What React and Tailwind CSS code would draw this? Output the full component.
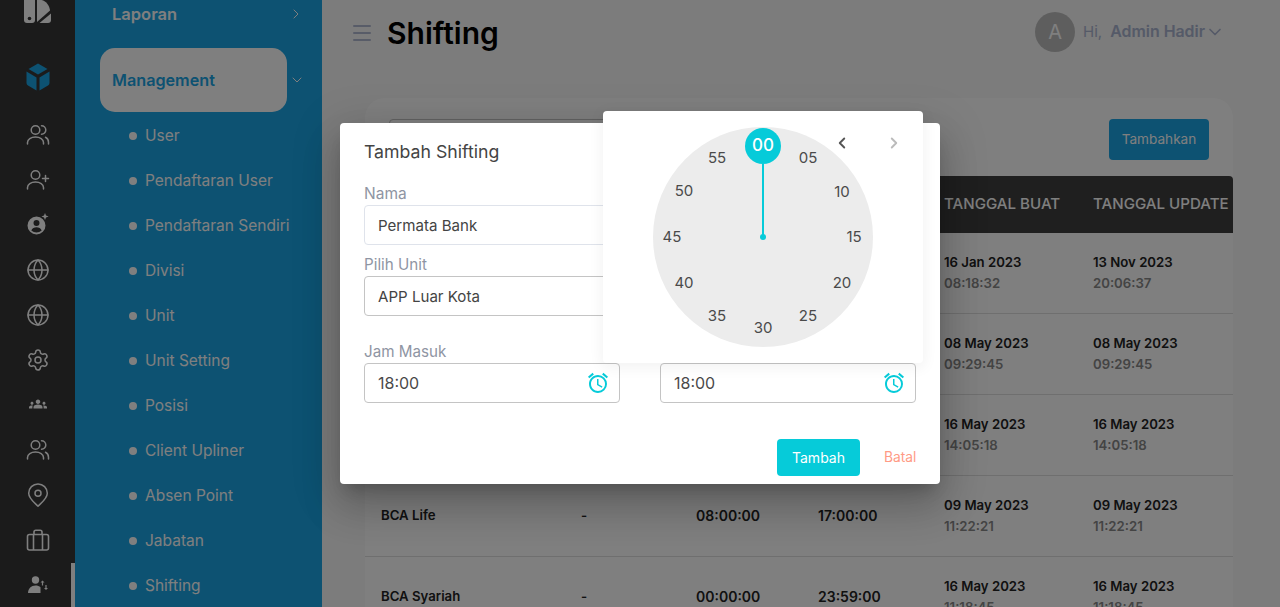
import React from "react";
import { Globe, Settings, ChevronRight, ChevronDown, ChevronLeft, Menu } from "lucide-react";
import { MdGroups, MdOutlineAccessAlarm } from "react-icons/md";

const font = { fontFamily: "Inter, 'Noto Sans', sans-serif" };

function Logo() {
  return (
    <svg width="28" height="24" viewBox="0 0 28 24" fill="#fff">
      <path d="M0 0h11v20a3 3 0 0 1-3 3H3a3 3 0 0 1-3-3z" />
      <circle cx="5.500" cy="18.500" r="1.800" fill="#363636" />
      <path d="M13 0h4.500c5 1 8 6 8.500 10.500L13 22z" />
      <path d="M27 13.500V20a3 3 0 0 1-3 3H15.500z" />
    </svg>
  );
}

function Cube() {
  return (
    <svg width="26" height="28" viewBox="0 0 26 28" fill="#1aa4e4">
      <path d="M13 0.500l9.500 5.500L13 11.500 3.500 6z" />
      <path d="M1.500 8.500l10 6V27.500l-8.500-5a3 3 0 0 1-1.500-2.500z" />
      <path d="M24.500 8.500l-10 6V27.500l8.500-5a3 3 0 0 0 1.500-2.500z" />
    </svg>
  );
}

function PeopleIcon() {
  return (
    <svg width="24" height="24" viewBox="0 0 24 24" fill="none" stroke="#fff" strokeWidth="1.500" strokeLinecap="round">
      <circle cx="9.500" cy="7" r="4.300" />
      <path d="M15.500 2.700a4.300 4.300 0 0 1 0 8.600" />
      <path d="M1.500 21v-1.500c0-3.300 3.500-5.500 8-5.500s8 2.200 8 5.500V21" />
      <path d="M19.500 14.300c1.900.9 3 2.800 3 5V21" />
    </svg>
  );
}

function PersonPlusIcon() {
  return (
    <svg width="24" height="24" viewBox="0 0 24 24" fill="none" stroke="#fff" strokeWidth="1.500" strokeLinecap="round">
      <circle cx="9.500" cy="7" r="4.300" />
      <path d="M1.500 21v-1.500c0-3.300 3.500-5.500 8-5.500s8 2.200 8 5.500V21" />
      <path d="M19.500 7.500v6M16.500 10.500h6" />
    </svg>
  );
}

function UserSpark() {
  return (
    <svg width="24" height="24" viewBox="0 0 24 24" fill="#fff">
      <path fillRule="evenodd" d="M10.500 3.500a9 9 0 1 1 0 18 9 9 0 0 1 0-18zm0 3.500a3 3 0 1 0 0 6 3 3 0 0 0 0-6zm-5.200 10.500c3 2.600 7.400 2.600 10.400 0-.8-2-3-3.200-5.200-3.200s-4.400 1.200-5.200 3.200z" />
      <path d="M19 0l1 2.600L22.600 3.500 20 4.500 19 7l-1-2.500-2.600-1 2.600-.9z" />
    </svg>
  );
}

function PinIcon() {
  return (
    <svg width="24" height="24" viewBox="0 0 24 24" fill="none" stroke="#fff" strokeWidth="1.500" strokeLinejoin="round">
      <path d="M12 .9a9.300 9.300 0 0 1 9.300 9.300c0 5.300-5.600 9.300-9.300 13-3.700-3.700-9.300-7.700-9.300-13A9.300 9.300 0 0 1 12 .9z" />
      <circle cx="12" cy="10.200" r="3" />
    </svg>
  );
}

function Bag() {
  return (
    <svg width="24" height="24" viewBox="0 0 24 24" fill="none" stroke="#fff" strokeWidth="1.600" strokeLinejoin="round">
      <rect x="1.500" y="6.500" width="21" height="15.500" rx="2" />
      <path d="M7.500 6.500V22M16.500 6.500V22M8 6.500V4a1.800 1.800 0 0 1 1.800-1.800h4.400A1.800 1.800 0 0 1 16 4v2.500" />
    </svg>
  );
}

function UserSwap() {
  return (
    <svg width="24" height="24" viewBox="0 0 24 24" fill="#fff">
      <circle cx="9.500" cy="7" r="3.700" />
      <path d="M2 20c0-4.500 3.300-7.500 7.500-7.500 2 0 3.800.6 5 1.800V20z" />
      <path d="M15.500 9.500l2-2 2 2h-1.400v3h-1.200v-3zM23 15l-2 2-2-2h1.400v-3h1.200v3z" transform="translate(-1 0)" />
    </svg>
  );
}

const railIcons = [
  <PeopleIcon />,
  <PersonPlusIcon />,
  <UserSpark />,
  <Globe size={24} strokeWidth={1.5} color="#fff" />,
  <Globe size={24} strokeWidth={1.5} color="#fff" />,
  <Settings size={24} strokeWidth={1.5} color="#fff" />,
  <MdGroups size={18} color="#fff" className="-mt-[2px]" />,
  <PeopleIcon />,
  <PinIcon />,
  <Bag />,
  <UserSwap />,
];

const menu = ["User", "Pendaftaran User", "Pendaftaran Sendiri", "Divisi", "Unit", "Unit Setting", "Posisi", "Client Upliner", "Absen Point", "Jabatan", "Shifting"];

const rows = [
  { d1: "16 Jan 2023", t1: "08:18:32", d2: "13 Nov 2023", t2: "20:06:37" },
  { d1: "08 May 2023", t1: "09:29:45", d2: "08 May 2023", t2: "09:29:45" },
  { d1: "16 May 2023", t1: "14:05:18", d2: "16 May 2023", t2: "14:05:18" },
  { n: "BCA Life", k: "-", a: "08:00:00", b: "17:00:00", d1: "09 May 2023", t1: "11:22:21", d2: "09 May 2023", t2: "11:22:21" },
  { n: "BCA Syariah", k: "-", a: "00:00:00", b: "23:59:00", d1: "16 May 2023", t1: "11:18:45", d2: "16 May 2023", t2: "11:18:45" },
];

const clockNums = [
  ["05", 45, -79], ["10", 79, -45], ["15", 91, 0], ["20", 79, 46], ["25", 45, 79], ["30", 0, 91],
  ["35", -46, 79], ["40", -79, 46], ["45", -91, 0], ["50", -79, -46], ["55", -46, -79],
];

const gridCols = "grid grid-cols-[200px_115px_122px_126px_149px_1fr] pl-4";

function TimeInput() {
  return (
    <div className="flex h-10 w-64 items-center justify-between rounded border border-[#c4c4c4] bg-white pl-[13px] pr-[9px] text-[16px] text-[#4a4a4a]">
      <span>18:00</span>
      <MdOutlineAccessAlarm size={24} color="#06cbd9" />
    </div>
  );
}

export default function App() {
  return (
    <div className="relative flex h-[607px] w-[1280px] overflow-hidden bg-[#f8f8f8]" style={font}>
      {/* rail */}
      <div className="relative flex w-[75px] shrink-0 flex-col items-center bg-[#363636]">
        <div className="flex h-[24px] shrink-0 items-start"><Logo /></div>
        <div className="mt-[38px] flex h-[30px] shrink-0 items-center"><Cube /></div>
        <div className="mt-[20px] flex shrink-0 flex-col items-center">
          {railIcons.map((ic, i) => (
            <div key={i} className="flex h-[45px] items-center justify-center">{ic}</div>
          ))}
        </div>
        <div className="absolute right-0 bottom-0 h-[44px] w-1 bg-white" />
      </div>

      {/* sidebar */}
      <div className="flex w-[247px] shrink-0 flex-col overflow-hidden bg-[#1aa4e4] text-white">
        <div className="flex h-[28px] shrink-0 items-center justify-between pl-[37px] pr-[18px]">
          <span className="text-[16.500px] font-semibold">Laporan</span>
          <ChevronRight size={16} strokeWidth={1.5} />
        </div>
        <div className="mt-[20px] flex shrink-0 items-center pl-[25px]">
          <div className="flex h-16 w-[187px] items-center rounded-[15px] bg-white pl-3 text-[16.200px] font-semibold text-[#1aa4e4]">Management</div>
          <ChevronDown size={16} strokeWidth={1.5} className="ml-[2px]" />
        </div>
        <div className="mt-[1px] flex shrink-0 flex-col">
          {menu.map((m) => (
            <div key={m} className="flex h-[45px] shrink-0 items-center gap-2 pl-[54px] text-[15.500px]">
              <span className="size-2 rounded-full bg-white" />
              <span>{m}</span>
            </div>
          ))}
        </div>
      </div>

      {/* main */}
      <div className="min-w-0 flex-1">
        <div className="flex h-[66px] items-start justify-between pl-[28px] pr-[55px]">
          <div className="flex items-center gap-[13px] pt-[14px]">
            <Menu size={24} strokeWidth={2} color="#b0b8d0" />
            <span className="text-[30px] leading-[38px] font-semibold text-black">Shifting</span>
          </div>
          <div className="flex items-center pt-[12px] text-[15.900px] text-[#aab4d0]">
            <div className="flex size-10 items-center justify-center rounded-full bg-[#bdbdbd] text-xl text-white">A</div>
            <span className="ml-2 text-[15px]">Hi,</span>
            <span className="ml-2 font-semibold">Admin Hadir</span>
            <ChevronDown size={20} strokeWidth={2} />
          </div>
        </div>

        <div className="mt-[32px] ml-[43px] w-[868px] rounded-t-[20px] bg-white">
          <div className="flex h-[78px] items-start justify-between pt-[21px] pl-6 pr-6">
            <div className="h-10 w-[300px] rounded border border-[#c4c4c4]" />
            <div className="flex h-[41px] w-[100px] items-center justify-center rounded bg-[#1aa4e4] text-[13.600px] text-white">Tambahkan</div>
          </div>
          <div className={`${gridCols} h-[57px] items-center rounded-t bg-[#3e3e3e] text-[15.100px] font-medium text-white`}>
            <span /><span /><span /><span />
            <span className="whitespace-nowrap">TANGGAL BUAT</span>
            <span className="whitespace-nowrap">TANGGAL UPDATE</span>
          </div>
          {rows.map((r, i) => (
            <div key={i} className={`${gridCols} h-[81px] items-center border-b border-[#dfdfdf] text-[13.200px] font-semibold text-[#222]`}>
              <span className="-mt-[1px]">{r.n}</span>
              <span className="-mt-[1px]">{r.k}</span>
              <span className="-mt-[1px] text-[14px]">{r.a}</span>
              <span className="-mt-[1px] text-[14px]">{r.b}</span>
              <div className="leading-[21px]">
                <div>{r.d1}</div>
                <div className="text-[#888]">{r.t1}</div>
              </div>
              <div className="leading-[21px]">
                <div>{r.d2}</div>
                <div className="text-[#888]">{r.t2}</div>
              </div>
            </div>
          ))}
        </div>
      </div>

      {/* overlay */}
      <div className="absolute inset-0 bg-black/50" />

      {/* modal */}
      <div className="absolute top-[123px] left-[340px] h-[361px] w-[600px] rounded bg-white px-6 pt-[17px] shadow-[0_11px_15px_-7px_rgba(0,0,0,.2),0_24px_38px_3px_rgba(0,0,0,.14),0_9px_46px_8px_rgba(0,0,0,.12)]">
        <div className="text-[17.700px] leading-6 text-[#444]">Tambah Shifting</div>
        <div className="mt-[20px] text-[15.500px] leading-[20px] text-[#8f95a3]">Nama</div>
        <div className="mt-[1px] flex h-10 w-[552px] items-center rounded border border-[#dfe3eb] pl-[13px] pt-[2px] text-[15.100px] text-[#444]">Permata Bank</div>
        <div className="mt-[10px] text-[15.200px] leading-[20px] text-[#8f95a3]">Pilih Unit</div>
        <div className="mt-[1px] flex h-10 w-[552px] items-center rounded border border-[#c4c4c4] pl-[13px] pt-[2px] text-[15.100px] text-[#444]">APP Luar Kota</div>
        <div className="mt-[26px] text-[15.200px] leading-[20px] text-[#8f95a3]">Jam Masuk</div>
        <div className="mt-[1px] flex gap-10">
          <TimeInput />
          <TimeInput />
        </div>
        <div className="mt-[36px] flex items-center justify-end gap-6">
          <div className="flex h-[37px] w-[83px] items-center justify-center rounded bg-[#06cbd9] text-[14px] text-white">Tambah</div>
          <span className="w-8 text-right text-[13.800px] text-[#ff9b85]">Batal</span>
        </div>
      </div>

      {/* clock popup */}
      <div className="absolute top-[111px] left-[603px] flex h-[252px] w-[320px] justify-center rounded bg-white pt-4 shadow-[0_3px_14px_2px_rgba(0,0,0,.05)]">
        <div className="relative size-[220px] rounded-full bg-[#ececec]">
          <div className="absolute top-[37px] left-[109px] h-[73px] w-[2px] bg-[#06cbd9]" />
          <div className="absolute top-[107px] left-[107px] size-[6px] rounded-full bg-[#06cbd9]" />
          <div className="absolute top-[1px] left-[92px] flex size-9 items-center justify-center rounded-full bg-[#06cbd9] text-[17px] font-medium text-white">00</div>
          {clockNums.map(([n, x, y]) => (
            <span
              key={n}
              className="absolute flex h-5 w-8 -translate-x-1/2 -translate-y-1/2 items-center justify-center text-[15px] text-[#4a4a4a]"
              style={{ left: 110 + x, top: 110 + y }}
            >
              {n}
            </span>
          ))}
        </div>
        <ChevronLeft size={18} strokeWidth={2.5} color="#555" className="absolute top-[23px] left-[230px]" />
        <ChevronRight size={18} strokeWidth={2.5} color="#bbb" className="absolute top-[23px] left-[282px]" />
      </div>
    </div>
  );
}
